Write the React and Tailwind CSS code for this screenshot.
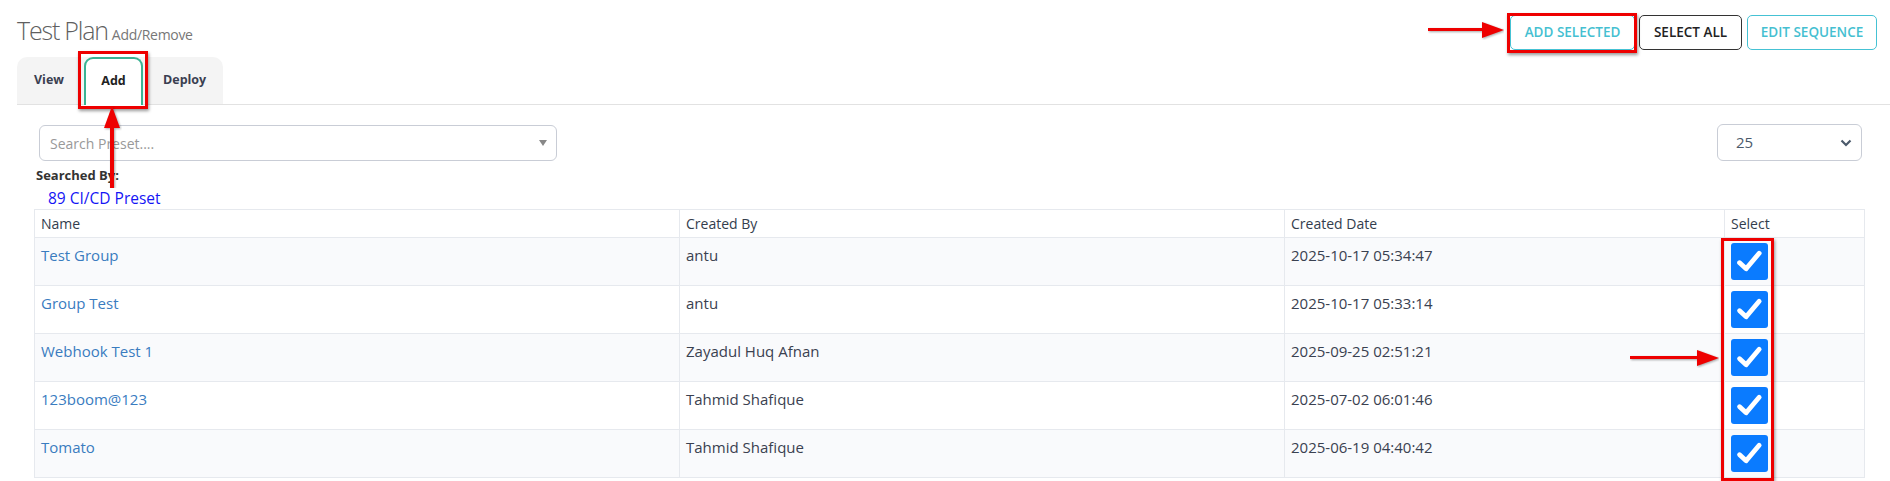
import React from 'react';

const rows = [
  { name: 'Test Group', by: 'antu', date: '2025-10-17 05:34:47' },
  { name: 'Group Test', by: 'antu', date: '2025-10-17 05:33:14' },
  { name: 'Webhook Test 1', by: 'Zayadul Huq Afnan', date: '2025-09-25 02:51:21' },
  { name: '123boom@123', by: 'Tahmid Shafique', date: '2025-07-02 06:01:46' },
  { name: 'Tomato', by: 'Tahmid Shafique', date: '2025-06-19 04:40:42' },
];

// red annotation arrow, drawn pointing right by default
const Arrow = ({ className, length, up }) => (
  <svg
    className={className}
    width={up ? 20 : length}
    height={up ? length : 20}
    viewBox={up ? `0 0 20 ${length}` : `0 0 ${length} 20`}
  >
    {up ? (
      <g style={{ filter: 'drop-shadow(1px 1px 1px rgba(0,0,0,0.35))' }}>
        <rect x="8" y="18" width="4" height={length - 18} fill="#ee0000" />
        <polygon points="10,0 2,22 18,22" fill="#ee0000" />
      </g>
    ) : (
      <g style={{ filter: 'drop-shadow(1px 1px 1px rgba(0,0,0,0.35))' }}>
        <rect x="0" y="8" width={length - 18} height="3" fill="#ee0000" />
        <polygon points={`${length},10 ${length - 22},2 ${length - 22},18`} fill="#ee0000" />
      </g>
    )}
  </svg>
);

const Checkbox = () => (
  <div className="w-[37px] h-[37px] rounded-[3px] bg-[#0a7bff] flex items-center justify-center">
    <svg width="29" height="29" viewBox="0 0 24 24">
      <path d="M3.8 13 L9.2 18 L20 5.2" fill="none" stroke="#fff" strokeWidth="4" strokeLinecap="round" strokeLinejoin="round" />
    </svg>
  </div>
);

export default function App() {
  return (
    <div className="relative w-[1890px] h-[481px] overflow-hidden bg-white font-['Open_Sans',sans-serif] text-[#3a4150]">
      {/* header */}
      <div className="flex justify-between pl-[17px] pr-[13px] pt-[15px]">
        <div className="flex items-baseline gap-[4px] -mt-[3px]">
          <span className="text-[25px] font-light text-[#5f5f5f] tracking-[-1.2px]">Test Plan</span>
          <span className="text-[14px] text-[#777] tracking-[-0.3px]">Add/Remove</span>
        </div>
        <div className="flex gap-[4px]">
          <button className="h-[35px] w-[125px] rounded-[5px] border border-[#45c2d4] text-[13.5px] font-semibold text-[#45bfd1]">
            ADD SELECTED
          </button>
          <button className="h-[35px] w-[103px] rounded-[5px] border border-[#333] text-[13.5px] font-semibold text-[#222]">
            SELECT ALL
          </button>
          <button className="ml-[1px] h-[35px] w-[130px] rounded-[5px] border border-[#45c2d4] text-[13.5px] font-semibold text-[#45bfd1]">
            EDIT SEQUENCE
          </button>
        </div>
      </div>

      {/* tabs */}
      <div className="mt-[7px] ml-[17px] border-b border-[#e2e2e2]">
        <div className="flex w-[206px] h-[47px] rounded-t-[10px] bg-[#f4f4f4] text-[12.5px] font-bold text-[#3a3f51]">
          <div className="w-[67px] pt-[14px] pl-[17px]">View</div>
          <div className="w-[59px] h-[48px] rounded-t-[9px] border-2 border-b-0 border-[#3bb394] bg-white pt-[13px] text-center text-[#222]">
            Add
          </div>
          <div className="flex-1 pt-[14px] pl-[20px]">Deploy</div>
        </div>
      </div>

      {/* controls */}
      <div className="flex justify-between pl-[39px] pr-[28px] mt-[20px]">
        <div className="w-[518px] h-[36px] rounded-[6px] border border-[#c9cdd6] flex items-center justify-between pl-[10px] pr-[9px]">
          <span className="text-[14px] text-[#999]">Search Preset....</span>
          <svg width="8" height="6" viewBox="0 0 8 6"><polygon points="0,0 8,0 4,6" fill="#888" /></svg>
        </div>
        <div className="w-[145px] h-[37px] -mt-[1px] rounded-[6px] border border-[#c9cdd6] flex items-center justify-between pl-[18px] pr-[9px]">
          <span className="text-[15px] text-[#4b5a6b]">25</span>
          <svg width="12" height="8" viewBox="0 0 12 8"><path d="M1.5 1.5 L6 6 L10.5 1.5" fill="none" stroke="#4b5a6b" strokeWidth="2.2" /></svg>
        </div>
      </div>

      <div className="pl-[36px] mt-[4px] text-[13px] font-bold text-[#333] leading-[20px]">Searched By:</div>
      <div className="pl-[48px] mt-[2px] text-[15.5px] text-[#1515f5] leading-[23px]">89 CI/CD Preset</div>

      {/* table */}
      <table className="ml-[34px] -mt-[1px] w-[1830px] border-collapse text-[15px] table-fixed">
        <colgroup>
          <col className="w-[645px]" />
          <col className="w-[605px]" />
          <col className="w-[440px]" />
          <col className="w-[140px]" />
        </colgroup>
        <thead>
          <tr className="h-[28px] text-left">
            {['Name', 'Created By', 'Created Date', 'Select'].map((h) => (
              <th key={h} className="border border-[#e6e9ee] px-[6px] text-[14px] font-normal text-[#333d4d] leading-[20px]">
                {h}
              </th>
            ))}
          </tr>
        </thead>
        <tbody>
          {rows.map((r, i) => (
            <tr key={r.name} className={`h-[48px] ${i % 2 === 0 ? 'bg-[#f9fafc]' : 'bg-white'}`}>
              <td className="border border-[#e6e9ee] px-[6px] pt-[7px] align-top leading-[21px] text-[#3a7cbf]">{r.name}</td>
              <td className="border border-[#e6e9ee] px-[6px] pt-[7px] align-top leading-[21px]">{r.by}</td>
              <td className="border border-[#e6e9ee] px-[6px] pt-[7px] align-top leading-[21px]">{r.date}</td>
              <td className="border border-[#e6e9ee] px-[6px] pt-[5px] align-top">
                <Checkbox />
              </td>
            </tr>
          ))}
        </tbody>
      </table>

      {/* annotations */}
      <div className="absolute left-[78px] top-[51px] w-[70px] h-[58px] border-[3px] border-[#ee0000] shadow-[1px_2px_3px_rgba(0,0,0,0.4)]" />
      <Arrow up length={82} className="absolute left-[102px] top-[106px]" />
      <div className="absolute left-[1507px] top-[13px] w-[130px] h-[40px] border-[3px] border-[#ee0000] shadow-[1px_2px_3px_rgba(0,0,0,0.4)]" />
      <Arrow length={76} className="absolute left-[1428px] top-[20px]" />
      <div className="absolute left-[1721px] top-[238px] w-[53px] h-[243px] border-[3px] border-[#ee0000] shadow-[1px_2px_3px_rgba(0,0,0,0.4)]" />
      <Arrow length={89} className="absolute left-[1630px] top-[348px]" />
    </div>
  );
}
